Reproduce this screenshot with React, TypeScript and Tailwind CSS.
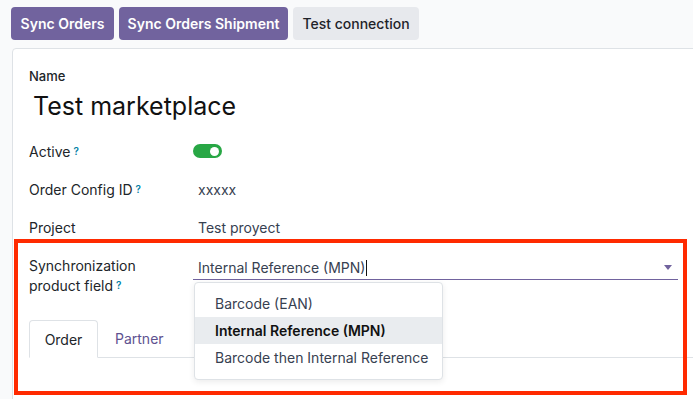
import React from "react";

function Help() {
  return <sup className="ml-[3px] text-[10px] font-semibold text-[#0180a5] relative -top-[2px]">?</sup>;
}

export default function App() {
  return (
    <div
      className="relative w-[693px] h-[399px] overflow-hidden bg-[#f9fafb] text-[#212529]"
      style={{ fontFamily: "Inter, 'Noto Sans', sans-serif" }}
    >
      <div className="flex gap-[5px] pl-[11px] pt-[7px]">
        <button className="h-[33px] w-[103px] rounded-[4px] bg-[#71639e] text-white text-[14px] font-semibold">Sync Orders</button>
        <button className="h-[33px] w-[169px] rounded-[4px] bg-[#71639e] text-white text-[14px] font-semibold">Sync Orders Shipment</button>
        <button className="h-[33px] w-[126px] rounded-[4px] bg-[#e7e9ed] text-[#1f2329] text-[14px] font-medium">Test connection</button>
      </div>

      <div className="ml-[12px] mt-[8px] mr-[-20px] h-[400px] bg-white border border-[#dee2e6] rounded-tl-[4px] pl-[16px] pt-[19px]">
        <div className="text-[13px] font-medium leading-[17px]">Name</div>
        <div className="pl-[4px] mt-[3px] h-[36px] flex items-center text-[25px] leading-[32px] text-[#111]">Test marketplace</div>

        <div className="mt-[8px] flex h-[38px] items-center text-[14px]">
          <div className="w-[164px]">Active<Help /></div>
          <div className="relative h-[14px] w-[29px] rounded-full bg-[#28a745]">
            <div className="absolute right-[3px] top-[2.5px] h-[9px] w-[9px] rounded-full bg-white" />
          </div>
        </div>
        <div className="flex h-[38px] items-center text-[14px]">
          <div className="w-[164px]">Order Config ID<Help /></div>
          <div className="pl-[5px] text-[#374151]">xxxxx</div>
        </div>
        <div className="flex h-[38px] items-center text-[14px]">
          <div className="w-[164px]">Project</div>
          <div className="pl-[5px] text-[#374151]">Test proyect</div>
        </div>

        <div className="mt-[10px] flex text-[14px]">
          <div className="w-[164px] leading-[20px]">
            Synchronization<br />product field<Help />
          </div>
          <div className="relative mr-[34px] flex-1">
            <div className="flex h-[24px] items-center border-b border-[#71639e] pl-[5px] pr-[6px] text-[#374151]">
              <span>Internal Reference (MPN)</span>
              <span className="ml-[1px] inline-block h-[16px] w-[1px] bg-[#111]" />
              <span className="ml-auto h-0 w-0 border-l-[4px] border-r-[4px] border-t-[5px] border-l-transparent border-r-transparent border-t-[#71639e]" />
            </div>
          </div>
        </div>

        <div className="mt-[24px] flex h-[38px] items-end border-b border-[#dee2e6] text-[14px]">
          <div className="mb-[-1px] flex h-[38px] w-[69px] items-center justify-center rounded-t-[4px] border border-b-white border-[#dee2e6] bg-white">Order</div>
          <div className="flex h-[38px] items-center pl-[17px] text-[#5e5290]">Partner</div>
        </div>
      </div>

      <div className="absolute left-[194px] top-[282px] w-[249px] h-[98px] rounded-[4px] border border-[#dee2e6] bg-white py-[7px] text-[14px] text-[#374151] shadow-[0_2px_6px_rgba(0,0,0,0.08)]">
        <div className="flex h-[27px] items-center pl-[20px]">Barcode (EAN)</div>
        <div className="flex h-[27px] items-center bg-[#e9ecef] pl-[20px] font-semibold text-[#111]">Internal Reference (MPN)</div>
        <div className="flex h-[27px] items-center pl-[20px]">Barcode then Internal Reference</div>
      </div>

      <div className="pointer-events-none absolute left-[14px] top-[239px] h-[156px] w-[673px] border-[4px] border-[#ff2a00]" />
    </div>
  );
}
